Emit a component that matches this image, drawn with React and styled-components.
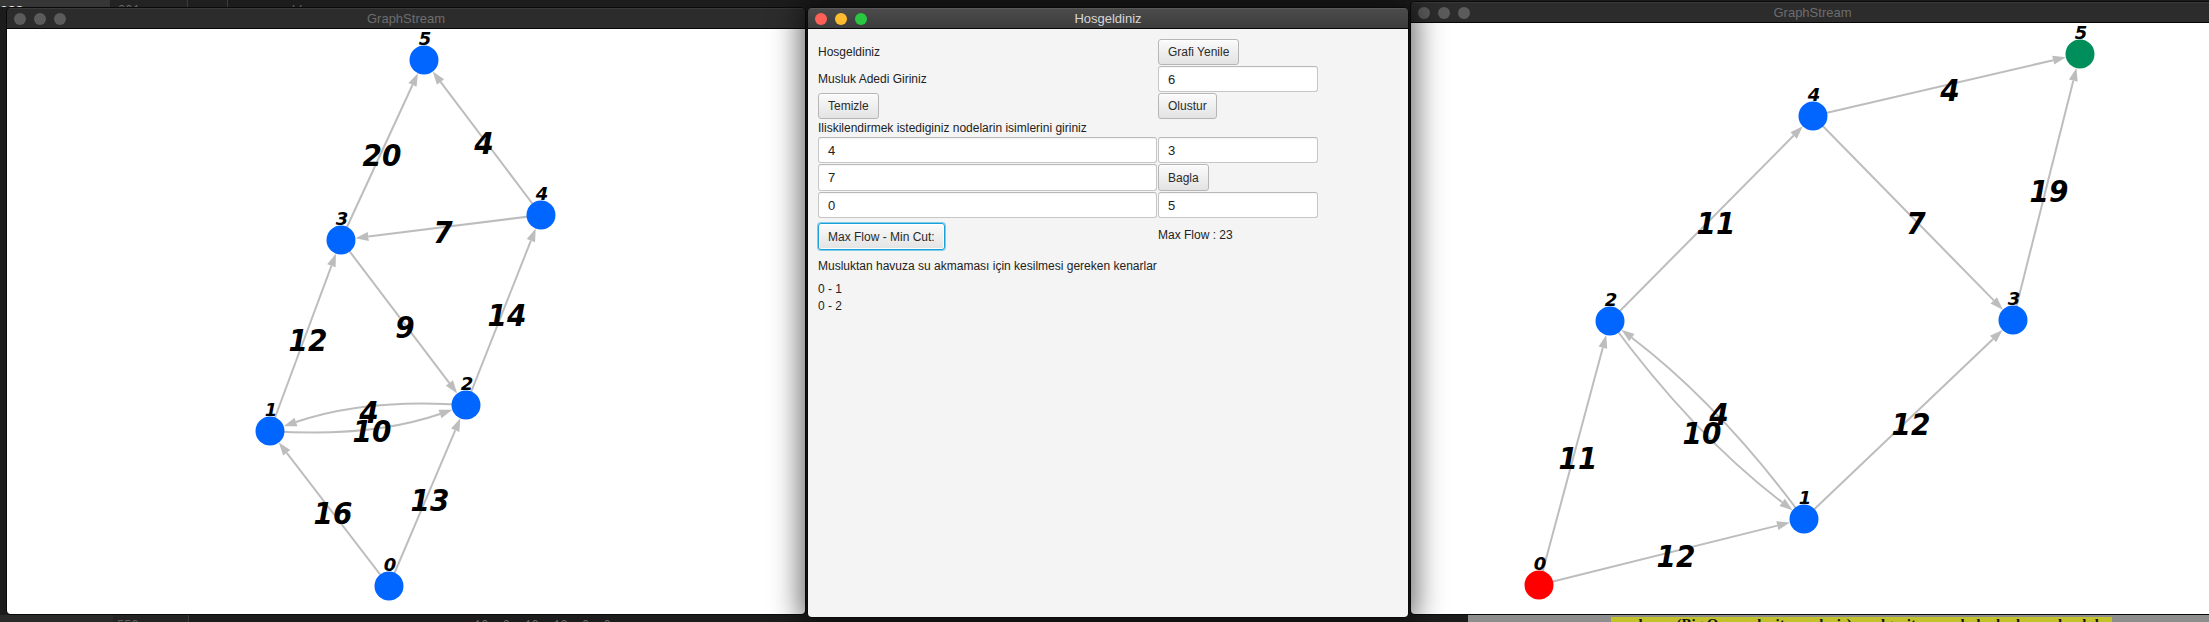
import React from 'react';
import styled, { createGlobalStyle } from 'styled-components';

const GlobalStyle = createGlobalStyle`
  html, body {
    margin: 0;
    padding: 0;
    background: #1c1c1c;
  }
  body {
    width: 2209px;
    height: 622px;
    overflow: hidden;
  }
`;

const Desktop = styled.div`
  position: relative;
  width: 2209px;
  height: 622px;
  overflow: hidden;
  background: #1c1c1c;
  display: flex;
  flex-direction: column;
  justify-content: space-between;
  font-family: "Liberation Sans", Arial, sans-serif;
`;

const IdeBar = styled.div`
  display: flex;
  height: 7px;
  overflow: hidden;
`;

const IdeCell = styled.div`
  flex: ${p => (p.$w ? 'none' : '1')};
  width: ${p => (p.$w ? `${p.$w}px` : 'auto')};
  height: 7px;
  overflow: hidden;
  box-sizing: border-box;
  background: ${p => p.$bg || '#1e1e1e'};
  border-right: ${p => (p.$divider ? '1px solid #3c3c3c' : 'none')};
  padding-left: ${p => p.$pad || 0}px;
`;

const IdeText = styled.div`
  white-space: nowrap;
  color: ${p => p.$color || '#777'};
  font-family: ${p => (p.$serif ? '"Liberation Serif", serif' : p.$mono ? '"Liberation Mono", monospace' : '"Liberation Sans", sans-serif')};
  font-size: ${p => p.$size || 13}px;
  font-weight: ${p => (p.$bold ? 700 : 400)};
  line-height: 14px;
  margin-top: ${p => p.$shift || 0}px;
  background: ${p => p.$mark || 'transparent'};
  display: inline-block;
`;

/* ---------- windows ---------- */

const Window = styled.section`
  position: absolute;
  left: ${p => p.$x}px;
  top: ${p => p.$y}px;
  width: ${p => p.$w}px;
  height: ${p => p.$h}px;
  box-sizing: border-box;
  border: 1px solid #0a0a0a;
  border-radius: 5px;
  overflow: hidden;
  display: flex;
  flex-direction: column;
  z-index: ${p => (p.$active ? 2 : 1)};
  box-shadow: ${p => (p.$active ? '0 0 30px 6px rgba(0, 0, 0, 0.62)' : 'none')};
`;

const TitleBar = styled.header`
  flex: none;
  height: 21px;
  box-sizing: border-box;
  border-bottom: 1px solid #050505;
  border-top: 1px solid ${p => (p.$active ? '#5a5a5a' : '#3a3a3a')};
  background: ${p => (p.$active ? 'linear-gradient(#4b4b4b, #3c3c3c)' : '#2c2c2c')};
  display: grid;
  grid-template-columns: 1fr auto 1fr;
  align-items: center;
`;

const Lights = styled.div`
  display: flex;
  gap: 8px;
  padding-left: 7px;
`;

const Light = styled.span`
  width: 12px;
  height: 12px;
  border-radius: 50%;
  background: ${p => p.$color};
`;

const Title = styled.div`
  font-size: 13px;
  color: ${p => (p.$active ? '#d6d6d6' : '#6d6d6d')};
  white-space: nowrap;
`;

const GraphArea = styled.div`
  flex: 1;
  background: #ffffff;
  overflow: hidden;
`;

const Canvas = styled.svg`
  display: block;
`;

const NodeName = styled.text`
  font-family: "DejaVu Sans", sans-serif;
  font-weight: 700;
  font-style: italic;
  font-size: 18px;
  fill: #000;
`;

const Weight = styled.text`
  font-family: "DejaVu Sans Condensed", "DejaVu Sans", sans-serif;
  font-stretch: condensed;
  font-weight: 700;
  font-style: italic;
  font-size: 31px;
  fill: #000;
`;

const R = 14.5;
const ARROW_LEN = 13;
const ARROW_W = 9;

function edgeShape(a, b, bend) {
  const dx = b.x - a.x;
  const dy = b.y - a.y;
  const len = Math.hypot(dx, dy);
  const nx = -dy / len;
  const ny = dx / len;
  const cx = (a.x + b.x) / 2 + nx * bend;
  const cy = (a.y + b.y) / 2 + ny * bend;
  const ex = b.x - cx;
  const ey = b.y - cy;
  const el = Math.hypot(ex, ey);
  const ux = ex / el;
  const uy = ey / el;
  const tip = { x: b.x - ux * R, y: b.y - uy * R };
  const base = { x: tip.x - ux * ARROW_LEN, y: tip.y - uy * ARROW_LEN };
  const px = -uy * (ARROW_W / 2);
  const py = ux * (ARROW_W / 2);
  const d = bend
    ? `M${a.x} ${a.y} Q${cx} ${cy} ${base.x} ${base.y}`
    : `M${a.x} ${a.y} L${base.x} ${base.y}`;
  const arrow = `${tip.x},${tip.y} ${base.x + px},${base.y + py} ${base.x - px},${base.y - py}`;
  return { d, arrow };
}

const Graph = ({ nodes, edges, box }) => {
  const [vx, vy, vw, vh] = box;
  return (
    <Canvas width={vw} height={vh} viewBox={`${vx} ${vy} ${vw} ${vh}`}>
      {edges.map((e, i) => {
        const { d, arrow } = edgeShape(nodes[e.from], nodes[e.to], e.bend || 0);
        return (
          <g key={`e${i}`}>
            <path d={d} fill="none" stroke="#bdbdbd" strokeWidth="2" />
            <polygon points={arrow} fill="#bdbdbd" />
          </g>
        );
      })}
      {Object.entries(nodes).map(([id, n]) => (
        <g key={`n${id}`}>
          <circle cx={n.x} cy={n.y} r={R} fill={n.color || '#0066ff'} />
          <NodeName x={n.x + 1} y={n.y - 22} textAnchor="middle" dominantBaseline="central">
            {id}
          </NodeName>
        </g>
      ))}
      {edges.map((e, i) => (
        <Weight key={`w${i}`} x={e.lx} y={e.ly} textAnchor="middle" dominantBaseline="central">
          {e.w}
        </Weight>
      ))}
    </Canvas>
  );
};

const leftNodes = {
  0: { x: 389, y: 586 },
  1: { x: 270, y: 431 },
  2: { x: 466, y: 405 },
  3: { x: 341, y: 240 },
  4: { x: 541, y: 215 },
  5: { x: 424, y: 60 },
};

const leftEdges = [
  { from: 3, to: 5, w: '20', lx: 382, ly: 155 },
  { from: 4, to: 5, w: '4', lx: 484, ly: 143 },
  { from: 4, to: 3, w: '7', lx: 443, ly: 232 },
  { from: 1, to: 3, w: '12', lx: 308, ly: 340 },
  { from: 3, to: 2, w: '9', lx: 405, ly: 327 },
  { from: 2, to: 4, w: '14', lx: 507, ly: 315 },
  { from: 2, to: 1, w: '4', lx: 369, ly: 412, bend: 20 },
  { from: 1, to: 2, w: '10', lx: 372, ly: 431, bend: 20 },
  { from: 0, to: 1, w: '16', lx: 333, ly: 513 },
  { from: 0, to: 2, w: '13', lx: 430, ly: 500 },
];

const rightNodes = {
  0: { x: 1539, y: 585, color: '#ff0000' },
  1: { x: 1804, y: 519 },
  2: { x: 1610, y: 321 },
  3: { x: 2013, y: 320 },
  4: { x: 1813, y: 116 },
  5: { x: 2080, y: 54, color: '#008f5a' },
};

const rightEdges = [
  { from: 4, to: 5, w: '4', lx: 1950, ly: 90 },
  { from: 2, to: 4, w: '11', lx: 1716, ly: 223 },
  { from: 4, to: 3, w: '7', lx: 1916, ly: 223 },
  { from: 3, to: 5, w: '19', lx: 2049, ly: 191 },
  { from: 1, to: 2, w: '4', lx: 1719, ly: 414, bend: 20 },
  { from: 2, to: 1, w: '10', lx: 1702, ly: 433, bend: 20 },
  { from: 1, to: 3, w: '12', lx: 1911, ly: 424 },
  { from: 0, to: 2, w: '11', lx: 1578, ly: 458 },
  { from: 0, to: 1, w: '12', lx: 1676, ly: 556 },
];

const GraphWindow = ({ x, y, w, h, nodes, edges }) => (
  <Window $x={x} $y={y} $w={w} $h={h}>
    <TitleBar>
      <Lights>
        <Light $color="#5b5b5b" />
        <Light $color="#5b5b5b" />
        <Light $color="#5b5b5b" />
      </Lights>
      <Title>GraphStream</Title>
      <span />
    </TitleBar>
    <GraphArea>
      <Graph nodes={nodes} edges={edges} box={[x + 1, y + 22, w - 2, h - 23]} />
    </GraphArea>
  </Window>
);

/* ---------- form window ---------- */

const FormArea = styled.div`
  flex: 1;
  background: #f4f4f4;
  padding: 10px 0 0 10px;
`;

const FormGrid = styled.div`
  display: grid;
  grid-template-columns: 339px 160px;
  grid-template-rows: 26px 26px 26px 16px 26px 27px 26px 32px 28px 16px 16px;
  column-gap: 1px;
  row-gap: 1px;
  font-size: 12px;
  color: #222;
`;

const Label = styled.div`
  align-self: center;
  line-height: 16px;
  white-space: nowrap;
  grid-column: ${p => (p.$span ? '1 / span 2' : 'auto')};
`;

const Button = styled.button`
  justify-self: start;
  align-self: ${p => (p.$end ? 'end' : 'stretch')};
  height: ${p => (p.$end ? '27px' : 'auto')};
  margin-bottom: ${p => (p.$end ? '1px' : '0')};
  box-sizing: border-box;
  padding: 0 9px;
  font: 12px "Liberation Sans", Arial, sans-serif;
  color: #2a2a2a;
  background: linear-gradient(#fbfbfb, #e3e3e3);
  border: 1px solid ${p => (p.$focused ? '#1a9fd6' : '#b6b6b6')};
  border-radius: 3px;
  box-shadow: ${p => (p.$focused ? '0 0 0 1px #7fcdec, inset 0 0 0 1px #ffffff' : 'inset 0 1px 0 #ffffff')};
`;

const Field = styled.div`
  box-sizing: border-box;
  background: #ffffff;
  border: 1px solid #c6c6c6;
  border-top-color: #b9b9b9;
  border-radius: 3px;
  box-shadow: inset 0 1px 1px rgba(0, 0, 0, 0.04);
  padding-left: 9px;
  display: flex;
  align-items: center;
  font-size: 13px;
  color: #222;
`;

const FormWindow = () => (
  <Window $x={807} $y={7} $w={602} $h={611} $active>
    <TitleBar $active>
      <Lights>
        <Light $color="#fe5f57" />
        <Light $color="#febc2e" />
        <Light $color="#28c840" />
      </Lights>
      <Title $active>Hosgeldiniz</Title>
      <span />
    </TitleBar>
    <FormArea>
      <FormGrid>
        <Label>Hosgeldiniz</Label>
        <Button>Grafi Yenile</Button>

        <Label>Musluk Adedi Giriniz</Label>
        <Field>6</Field>

        <Button>Temizle</Button>
        <Button>Olustur</Button>

        <Label $span>Iliskilendirmek istediginiz nodelarin isimlerini giriniz</Label>

        <Field>4</Field>
        <Field>3</Field>

        <Field>7</Field>
        <Button>Bagla</Button>

        <Field>0</Field>
        <Field>5</Field>

        <Button $focused $end>Max Flow - Min Cut:</Button>
        <Label>Max Flow : 23</Label>

        <Label $span>Musluktan havuza su akmaması için kesilmesi gereken kenarlar</Label>
        <Label $span>0 - 1</Label>
        <Label $span>0 - 2</Label>
      </FormGrid>
    </FormArea>
  </Window>
);

export default function App() {
  return (
    <>
      <GlobalStyle />
      <Desktop>
        <IdeBar>
          <IdeCell $w={110} $bg="#363636">
            <IdeText $color="#e8e8e8" $size={15} $shift={-8}>ces</IdeText>
          </IdeCell>
          <IdeCell $w={78} $bg="#232323" $divider $pad={8}>
            <IdeText $color="#6a6a6a" $mono $size={12} $shift={-7}>301</IdeText>
          </IdeCell>
          <IdeCell $w={40} $bg="#1f1f1f" $divider />
          <IdeCell $pad={60} $bg="#1c1c1c">
            <IdeText $color="#6a6a6a" $mono $size={12} $shift={-7}>//</IdeText>
          </IdeCell>
        </IdeBar>
        <IdeBar>
          <IdeCell $w={113} $bg="#2a2a2a" />
          <IdeCell $w={76} $bg="#242424" $divider $pad={4}>
            <IdeText $color="#5e5e5e" $mono $size={12} $shift={-1}>559</IdeText>
          </IdeCell>
          <IdeCell $w={1279} $bg="#1c1c1c" $pad={285}>
            <IdeText $color="#6a6a6a" $mono $size={12} $shift={-1}>10, 0, 10, 12, 0, 0,</IdeText>
          </IdeCell>
          <IdeCell $bg="#8e8e8e" $pad={143}>
            <IdeText $color="#111" $serif $bold $size={15} $shift={-3} $mark="#c3c12c">
              yapılması (Big O complexity analysis) ve algoritmanın kaba kodu yazılmalıdır.
            </IdeText>
          </IdeCell>
        </IdeBar>

        <GraphWindow x={6} y={7} w={800} h={608} nodes={leftNodes} edges={leftEdges} />
        <FormWindow />
        <GraphWindow x={1410} y={1} w={805} h={614} nodes={rightNodes} edges={rightEdges} />
      </Desktop>
    </>
  );
}
